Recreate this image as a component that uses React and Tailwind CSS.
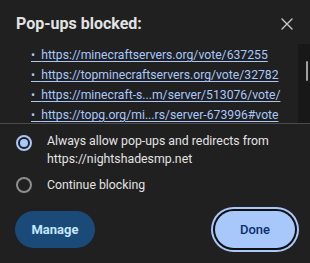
import React from "react";

const links = [
  "https://minecraftservers.org/vote/637255",
  "https://topminecraftservers.org/vote/32782",
  "https://minecraft-s...m/server/513076/vote/",
  "https://topg.org/mi...rs/server-673996#vote",
];

export default function App() {
  return (
    <div
      className="w-[310px] h-[263px] bg-[#202020] flex flex-col overflow-hidden"
      style={{ fontFamily: 'Roboto, "Noto Sans", sans-serif' }}
    >
      <div className="h-[44px] flex items-start justify-between pl-[16px] pr-[17px] pt-[13px]">
        <div className="text-[16px] leading-[22px] font-bold text-[#e3e3e3]">
          Pop-ups blocked:
        </div>
        <svg width="12" height="12" viewBox="0 0 12 12" className="mt-[5px]">
          <path d="M1 1L11 11M11 1L1 11" stroke="#c8c8c8" strokeWidth="1.4" strokeLinecap="round" />
        </svg>
      </div>
      <div className="h-[79px] flex">
        <div className="flex-1 pl-[31px] pt-[1px] flex flex-col">
          {links.map((l) => (
            <div key={l} className="h-[20px] text-[12.2px] leading-[20px] text-[#a8c7fa] underline underline-offset-[2px] whitespace-nowrap">
              •&nbsp;&nbsp;{l}
            </div>
          ))}
        </div>
        <div className="w-[12px] bg-[#181818] pt-[17px] pl-[8px]">
          <div className="w-[2px] h-[20px] bg-[#a0a0a0] rounded-full" />
        </div>
      </div>
      <div className="h-px bg-[#4a4a4a]" />
      <div className="flex flex-col pl-[16px] pt-[8px]">
        <div className="flex items-start gap-[15px]">
          <div className="w-[16px] h-[16px] mt-[3px] rounded-full border-2 border-[#a8c7fa] flex items-center justify-center shrink-0">
            <div className="w-[8px] h-[8px] rounded-full bg-[#a8c7fa]" />
          </div>
          <div className="text-[12.3px] leading-[18px] text-[#e3e3e3]">
            Always allow pop-ups and redirects from
            <br />
            https://nightshadesmp.net
          </div>
        </div>
        <div className="flex items-center gap-[15px] mt-[7px]">
          <div className="w-[16px] h-[16px] rounded-full border-2 border-[#8e8e8e] shrink-0" />
          <div className="text-[12.3px] leading-[20px] text-[#e3e3e3]">Continue blocking</div>
        </div>
      </div>
      <div className="flex justify-between px-[15px] mt-[16px]">
        <button className="w-[80px] h-[37px] rounded-full bg-[#1a4a78] text-[#c2e7ff] text-[13px] font-bold">
          Manage
        </button>
        <button className="w-[80px] h-[37px] rounded-full bg-[#a8c7fa] text-[#0a2f6e] text-[13px] font-medium ring-2 ring-[#a8c7fa] ring-offset-2 ring-offset-[#111111]">
          Done
        </button>
      </div>
    </div>
  );
}
